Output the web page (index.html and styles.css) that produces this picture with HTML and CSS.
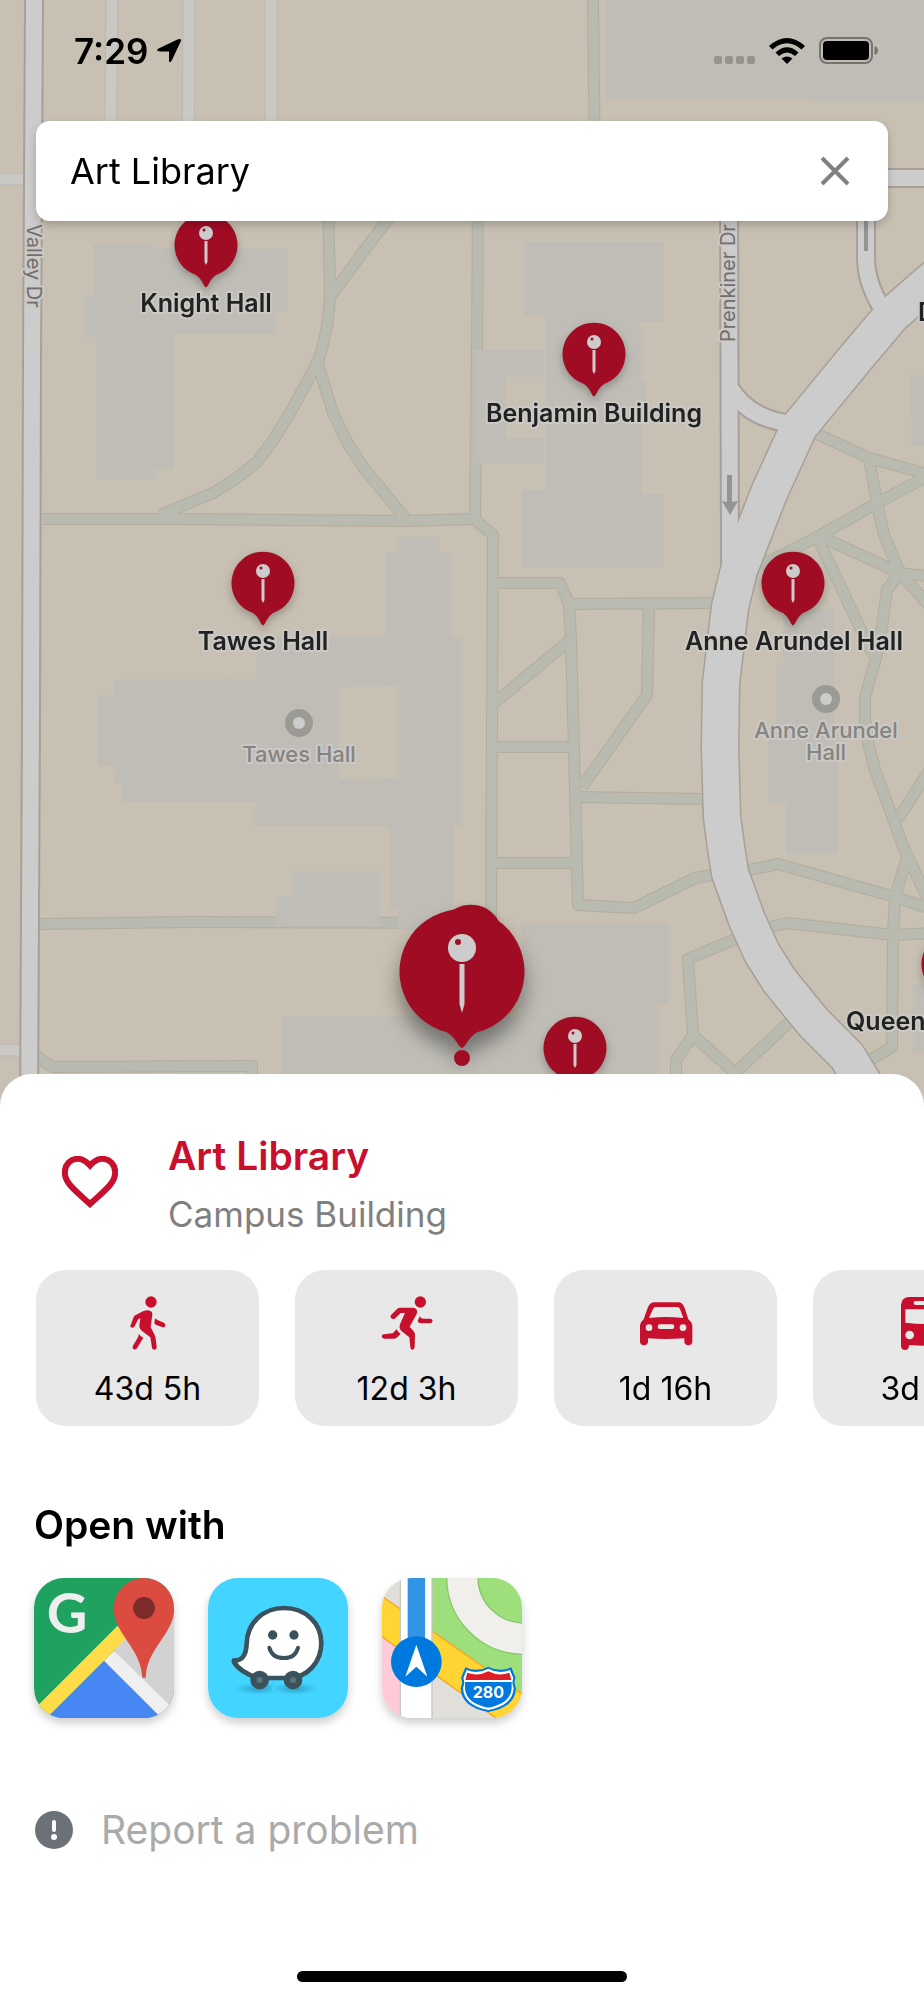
FILE: index.html
```html
<!DOCTYPE html>
<html lang="en">
<head>
    <meta charset="UTF-8">
    <meta name="viewport" content="width=device-width, initial-scale=1.0">
    <title>Campus Map - Art Library</title>
    <link rel="stylesheet" href="styles.css">
</head>
<body>

<div class="screen">
    <svg class="map" viewBox="0 0 924 1110" role="img" aria-label="Campus map">
        <defs>
            <g id="pin">
                <path class="pin-body" d="M0 42.500C-2 42-4 34-10 30A31.500 31.500 0 1 1 10 30C4 34 2 42 0 42.500z"/>
                <circle class="pin-light" cy="-12" r="7"/>
                <circle class="pin-dot" cx="-2" cy="-15" r="1.500"/>
                <path class="pin-light" d="M-1.500-4h3V17L0 20L-1.500 17z"/>
            </g>
            <g id="poi">
                <circle class="poi-ring" r="14"/>
                <circle class="poi-hole" r="6"/>
            </g>

            <!-- footpaths -->
            <path id="paths" d="M593 0L595 180
                M328 200L330 290Q330 325 318 362L290 413L272 442L257 462L237 478L213 493L160 515
                M395 210L360 256L330 297
                M316 358L333 413L347 442L363 467L405 518
                M42 519L180 519L405 521L474 519L493 535L492 725L491 923
                M478 200L477 350L475 519
                M493 583H560L569 604L571 640L575 787L578 905L634 908L695 878L712 875L749 870L778 864L895 897L934 910
                M569 604L715 603
                M649 604L647 695L582 787
                M570 640L492 705
                M492 747L574 747M576 797L706 799M492 863L577 863
                M740 937L688 959L693 1035L676 1060V1090
                M693 1035L735 1073L800 1012
                M765 928L787 923L893 935L934 933
                M865 720L869 747L875 770L907 857L895 897L893 933L892 1047L870 1060
                M907 855L934 912M898 819L934 763
                M815 433L869 458L934 476
                M869 458L877 503L884 535L900 573L887 590L879 647L865 697V725
                M934 473L877 503L819 536L760 566
                M819 536L900 573L934 577M817 537L873 655M900 573L934 611
                M40 924L193 922L491 923
                M35 1055L52 1067L252 1066V1100"/>

            <!-- side streets -->
            <path id="streets" d="M112 0L110 180M189 0L188 180M271 0V180M0 179H30M0 1050H26"/>

            <path id="drives" d="M34 0L32 360L31 720L29 1110M729 180L730 560L737 610
                M729 386Q748 420 795 424M866 180V258Q866 288 890 320M880 178H934"/>

            <path id="avenue" d="M944 270L892 315L854 360L799 427L769 493L739 570L730 607L721 683L720 747
                L722 817L726 847L730 873L747 920L762 953L779 980L813 1022L847 1056L880 1110"/>
        </defs>

        <rect class="ground" width="924" height="1110"/>

        <use href="#paths" class="path-edge"/>
        <use href="#paths" class="path-fill"/>
        <use href="#streets" class="street-edge"/>
        <use href="#streets" class="street-fill"/>

        <g class="building">
            <path d="M606 0H924V101H815V100H606z"/>
            <path d="M93 243H153V248L288 249V311H276V334H174V469H156V479H96V337H84V296H94z"/>
            <path d="M524 242H664V322H641V382H646V425H642V494H664V567H522V490H546V316H524z"/>
            <path d="M473 350H544V377H506V438H544V463H473z"/>
            <path fill-rule="evenodd" d="M397 537H440V553H451V638H461V826H454V930H398V910H390L389 826H255V802H122V783H115V766H98V695H114V680L256 679V637L386 636V553H397zM339 687V779L399 778V686z"/>
            <path d="M292 871H380V926H276V896H292z"/>
            <path d="M522 923H669V1004H657V1110H282V1016H522z"/>
            <path d="M783 609H834V735H838V853H786V803H768V735H776V663H783z"/>
            <path d="M910 375H924V446H912z"/>
            <path d="M913 984H924V1053H913z"/>
        </g>

        <use href="#drives" class="drive-edge"/>
        <use href="#avenue" class="avenue-edge"/>
        <use href="#drives" class="drive-fill"/>
        <use href="#avenue" class="avenue-fill"/>

        <!-- one way arrows -->
        <path class="arrow" d="M727 475h5v27l6-1L730 515L722 501l5 1z"/>
        <path class="arrow" d="M864 200h4V251h-4z"/>

        <g class="road-name">
            <text transform="translate(27 224) rotate(90)">Valley Dr</text>
            <text transform="translate(735 342) rotate(-90)">Prenkiner Dr</text>
        </g>

        <use href="#poi" x="299" y="723"/>
        <use href="#poi" x="826" y="699"/>
        <g class="poi-name">
            <text x="299" y="762">Tawes Hall</text>
            <text x="826" y="738">Anne Arundel</text>
            <text x="826" y="760">Hall</text>
        </g>

        <g class="pins">
            <use href="#pin" x="206" y="245"/>
            <use href="#pin" x="594" y="354"/>
            <use href="#pin" x="263" y="583"/>
            <use href="#pin" x="793" y="583"/>
            <use href="#pin" x="575" y="1048"/>
            <use href="#pin" x="953" y="964"/>
            <use href="#pin" x="471" y="936"/>
        </g>
        <g class="pin-name">
            <text x="206" y="312">Knight Hall</text>
            <text x="594" y="422">Benjamin Building</text>
            <text x="263" y="650">Tawes Hall</text>
            <text x="794" y="650">Anne Arundel Hall</text>
            <text class="from-left" x="846" y="1030">Queen Anne's Hall</text>
            <text class="from-left" x="918" y="321">Dorchester Hall</text>
        </g>

        <!-- selected building -->
        <g class="pin-selected">
            <path class="pin-body" d="M462 1048C459 1048 455 1036 446 1032A62.500 62.500 0 1 1 478 1032C469 1036 465 1048 462 1048z"/>
        </g>
        <circle class="pin-light" cx="462" cy="948" r="14"/>
        <circle class="pin-dot" cx="458" cy="942" r="3"/>
        <path class="pin-light" d="M459.500 964h5V1004L462 1013L459.500 1004z"/>
        <circle class="pin-dot" cx="462" cy="1058" r="8"/>
    </svg>

    <header class="top">
        <div class="status-bar">
            <div class="clock">
                <span>7:29</span>
                <svg width="26" height="24" viewBox="0 0 26 24"><path d="M23.500 0Q26 0 24.500 3L15.500 22Q13 25 13 21V12.500H4Q-1 12 2.500 9.500L21.500 .5z"/></svg>
            </div>
            <div class="signals">
                <svg class="cell" width="42" height="28" viewBox="0 0 42 28">
                    <rect x="0" y="19" width="8" height="8" rx="2"/>
                    <rect x="11" y="19" width="8" height="8" rx="2"/>
                    <rect x="22" y="19" width="8" height="8" rx="2"/>
                    <rect x="33" y="19" width="8" height="8" rx="2"/>
                </svg>
                <svg width="36" height="26" viewBox="0 0 36 26">
                    <path d="M0 8Q18-8 36 8L32.500 11.500Q18-1 3.500 11.500z"/>
                    <path d="M6.500 14.500Q18 4 29.500 14.500L26 18Q18 11 10 18z"/>
                    <path d="M12.500 20.500Q18 16.500 23.500 20.500L18 26z"/>
                </svg>
                <svg width="60" height="28" viewBox="0 0 60 28">
                    <rect class="battery-case" x="2" y="1" width="52" height="25" rx="7"/>
                    <rect x="5" y="4" width="46" height="19" rx="4"/>
                    <path class="battery-tip" d="M56.500 9Q60 10 60 13.500T56.500 18z"/>
                </svg>
            </div>
        </div>

        <form class="search">
            <input type="text" name="place" value="Art Library" aria-label="Search for a building">
            <button type="button" class="clear" aria-label="Clear search">
                <svg width="30" height="30" viewBox="0 0 30 30"><path d="M2 2L28 28M28 2L2 28"/></svg>
            </button>
        </form>
    </header>

    <main class="sheet">
        <div class="place">
            <button type="button" class="favorite" aria-label="Add to favorites">
                <svg width="56" height="52" viewBox="0 0 56 52"><path d="M28 9.500C24 5 20 2.800 15.500 2.800C8.500 2.800 2.800 8.500 2.800 16.500C2.800 28 16 36.500 28 48C40 36.500 53.200 28 53.200 16.500C53.200 8.500 47.500 2.800 40.500 2.800C36 2.800 32 5 28 9.500z"/></svg>
            </button>
            <div>
                <h1>Art Library</h1>
                <p>Campus Building</p>
            </div>
        </div>

        <div class="modes">
            <button type="button" class="mode">
                <svg viewBox="0 0 162 162">
                    <circle cx="90" cy="18" r="17"/>
                    <path d="M28 90L38 63Q40 59 44 57L66 46Q82 38 93 48Q94 52 94 56L89 93L101 117Q103 122 104 128L107 153Q107 161 100 161Q94 161 93 155L88 124L62 104Q54 96 55 88L58 67L52 69L41 91Q38 96 33 95Q27 94 28 90z"/>
                    <path d="M54 114Q58 122 67 125L48 157Q44 162 38 160Q33 157 35 151L51 124z"/>
                    <path d="M103 67Q106 71 110 72L130 81Q134 84 133 89Q131 95 125 94L104 86Q99 83 100 78z"/>
                </svg>
                <span>43d 5h</span>
            </button>
            <button type="button" class="mode">
                <svg viewBox="0 0 162 162">
                    <circle cx="121" cy="18" r="17"/>
                    <path d="M33 57L52 38Q55 35 60 35L100 35Q113 37 111 50Q110 54 108 58L89 92L102 107Q105 111 105 117L104 154Q103 161 97 161Q91 161 91 154L88 124L64 105Q56 97 60 85L75 51L62 51L44 68Q38 71 34 67Q30 62 33 57z"/>
                    <path d="M50 100Q53 108 62 113L52 124Q48 128 42 128L12 128Q5 127 5 121Q5 115 12 115L38 112z"/>
                    <path d="M119 61Q122 68 130 68L151 68Q158 69 158 75Q157 81 151 82L122 82Q114 81 113 75z"/>
                </svg>
                <span>12d 3h</span>
            </button>
            <button type="button" class="mode">
                <svg viewBox="0 0 162 162">
                    <path fill-rule="evenodd" d="M3 138V88Q4 78 14 70L26 36Q32 19 46 19H118Q131 19 137 36L148 70Q159 78 160 88V138Q159 147 148 148Q137 147 136 138V127Q81 131 27 127V138Q26 147 14 148Q4 147 3 138zM42 39L30 66Q81 60 133 66L123 39Q121 33 114 33H50Q44 33 42 39zM20 95a10 10 0 1 0 20 0a10 10 0 1 0-20 0zM122 95a10 10 0 1 0 20 0a10 10 0 1 0-20 0zM63 85a7 7 0 0 0 0 14H99a7 7 0 0 0 0-14z"/>
                </svg>
                <span>1d 16h</span>
            </button>
            <button type="button" class="mode">
                <svg viewBox="0 0 162 162">
                    <path fill-rule="evenodd" d="M9 26Q11 3 34 3H128Q151 3 153 26V150Q152 162 141 162Q130 162 129 150V147Q81 151 33 147V150Q32 162 21 162Q10 162 9 150zM22 40V80Q81 88 140 80V40zM53 15a6 6 0 0 0 0 12H109a6 6 0 0 0 0-12zM22 117a13 13 0 1 0 26 0a13 13 0 1 0-26 0zM114 117a13 13 0 1 0 26 0a13 13 0 1 0-26 0z"/>
                </svg>
                <span>3d 4h</span>
            </button>
        </div>

        <h2>Open with</h2>

        <div class="apps">
            <a href="#google-maps" class="app" aria-label="Google Maps">
                <svg viewBox="0 0 420 420">
                    <rect width="420" height="420" fill="#1fa160"/>
                    <path fill="#d2d2d2" d="M240 218L420 0V420z"/>
                    <path fill="#4787f3" d="M210 248L20 438H400z"/>
                    <path fill="#efefef" d="M240 218L450 424L410 448L210 248z"/>
                    <path fill="#ffdc48" d="M251 143L-10 404L20 438L285 173z"/>
                    <path fill="#db4b40" d="M330 300Q324 300 324 290C318 210 239 165 239 91A91 91 0 0 1 421 91C421 165 342 210 336 290Q336 300 330 300z"/>
                    <circle fill="#7e2c2a" cx="330" cy="90" r="33"/>
                    <text class="g-mark" x="99" y="165">G</text>
                </svg>
            </a>
            <a href="#waze" class="app" aria-label="Waze">
                <svg viewBox="0 0 420 420">
                    <defs>
                        <radialGradient id="wheel-shadow">
                            <stop offset="0" stop-color="#2ba3c8"/>
                            <stop offset="1" stop-color="#43d4ff"/>
                        </radialGradient>
                    </defs>
                    <rect width="420" height="420" fill="#43d4ff"/>
                    <ellipse fill="url(#wheel-shadow)" cx="150" cy="332" rx="70" ry="18"/>
                    <ellipse fill="url(#wheel-shadow)" cx="260" cy="332" rx="70" ry="18"/>
                    <path fill="#fff" stroke="#3b525c" stroke-width="14" stroke-linejoin="round" d="M78 247Q114 250 116 196C118 135 165 90 228 90C292 90 340 135 340 195C340 250 300 300 240 300H150C115 290 88 270 78 252Q77 248 78 247z"/>
                    <g fill="#3b525c">
                        <circle cx="194" cy="171" r="14"/>
                        <circle cx="258" cy="171" r="14"/>
                        <circle cx="155" cy="306" r="28"/>
                        <circle cx="255" cy="306" r="28"/>
                    </g>
                    <path fill="none" stroke="#3b525c" stroke-width="12" stroke-linecap="round" d="M184 209Q192 240 228 240Q262 240 270 209"/>
                    <circle fill="#5d737c" cx="155" cy="306" r="9"/>
                    <circle fill="#5d737c" cx="255" cy="306" r="9"/>
                </svg>
            </a>
            <a href="#apple-maps" class="app" aria-label="Apple Maps">
                <svg viewBox="0 0 420 420">
                    <rect width="420" height="420" fill="#e0dfda"/>
                    <path fill="#ffcbd8" d="M0 176L56 215V420H0z"/>
                    <path fill="#9cdf7b" d="M150 0H420V360L150 158z"/>
                    <circle fill="none" stroke="#88c46e" stroke-width="98" cx="425" cy="-2" r="184"/>
                    <circle fill="none" stroke="#f1efeb" stroke-width="90" cx="425" cy="-2" r="184"/>
                    <path fill="#ffd534" stroke="#ff9f1a" stroke-width="4" d="M-20 41L440 361V490L-20 162z"/>
                    <path fill="#fff" stroke="#c9c8bd" stroke-width="4" d="M55-5H150V425H55z"/>
                    <path fill="#3294e4" d="M77 0H129V200H77z"/>
                    <circle fill="#0079de" cx="103" cy="251" r="76"/>
                    <path fill="#fff" d="M103 200L136 296L103 266L70 296z"/>
                    <path fill="#0079de" d="M250 268Q285 284 319 266Q353 284 388 268L401 300Q394 312 402 330Q400 388 319 402Q238 388 236 330Q244 312 237 300z"/>
                    <path fill="#fff" d="M254 276Q287 290 319 272Q351 290 384 276L394 301Q388 313 395 331Q392 383 319 396Q246 383 243 331Q250 313 244 301z"/>
                    <path fill="#df1f26" d="M256 284Q289 296 319 280Q349 296 382 284L388 306H250z"/>
                    <path fill="#0079de" d="M249 312H389L389 331Q386 377 319 389Q252 377 249 331z"/>
                    <text class="shield" x="319" y="360">280</text>
                </svg>
            </a>
        </div>

        <a href="#report" class="report">
            <svg width="38" height="38" viewBox="0 0 38 38">
                <circle fill="#6c7178" cx="19" cy="19" r="19"/>
                <rect fill="#fff" x="17" y="9" width="4" height="12" rx="2"/>
                <circle fill="#fff" cx="19" cy="26" r="3"/>
            </svg>
            <span>Report a problem</span>
        </a>

        <div class="home-indicator"></div>
    </main>
</div>

</body>
</html>
```
FILE: styles.css
```css
* {
    box-sizing: border-box;
}

body {
    margin: 0;
    font-family: Inter, "Liberation Sans", sans-serif;
    background-color: #c8c0b2;
    color: #000;
}

h1,
h2,
p {
    margin: 0;
}

button {
    font-family: inherit;
    border: none;
    padding: 0;
    background: none;
    cursor: pointer;
}

.screen {
    position: relative;
    min-height: 100vh;
    display: flex;
    flex-direction: column;
    justify-content: space-between;
    overflow: hidden;
}

/* Map */
.map {
    position: absolute;
    top: 0;
    left: 0;
    width: 100%;
    height: auto;
}

.ground {
    fill: #c8c0b2;
}

.building {
    fill: #bfbdb6;
}

.map use {
    stroke-linejoin: round;
}

.path-edge,
.path-fill,
.street-edge,
.street-fill,
.drive-edge,
.drive-fill,
.avenue-edge,
.avenue-fill {
    fill: none;
}

.path-edge {
    stroke: #b2ad9c;
    stroke-width: 12px;
}

.path-fill {
    stroke: #b9bab0;
    stroke-width: 10px;
}

.street-edge {
    stroke: #b9b7af;
    stroke-width: 13px;
}

.street-fill {
    stroke: #c9c8c4;
    stroke-width: 11px;
}

.drive-edge {
    stroke: #a89f96;
    stroke-width: 20px;
}

.drive-fill {
    stroke: #ccc;
    stroke-width: 16px;
}

.avenue-edge {
    stroke: #a89f96;
    stroke-width: 39px;
}

.avenue-fill {
    stroke: #ccc;
    stroke-width: 36px;
}

.arrow {
    fill: #949494;
}

.map text {
    stroke: #cbc9c6;
    stroke-width: 4px;
    stroke-linejoin: round;
    paint-order: stroke;
    text-anchor: middle;
}

.map .road-name text {
    font-size: 20px;
    fill: #6f6f6f;
    text-anchor: start;
}

.poi-name text {
    font-size: 22px;
    font-weight: 500;
    fill: #85847f;
}

.pin-name text {
    font-size: 25px;
    font-weight: 600;
    fill: #222;
}

.map .pin-name .from-left {
    text-anchor: start;
}

.poi-ring {
    fill: #9b9a94;
}

.poi-hole {
    fill: #ccc;
}

.pins {
    filter: drop-shadow(0 4px 4px rgba(0, 0, 0, 0.25));
}

.pin-selected {
    filter: drop-shadow(0 14px 10px rgba(0, 0, 0, 0.4));
}

.pin-body,
.pin-dot {
    fill: #a00c24;
}

.pin-light {
    fill: #cdcbcb;
}

/* Status bar and search */
.top {
    position: relative;
    padding: 0 36px;
}

.status-bar {
    display: flex;
    justify-content: space-between;
    align-items: center;
    height: 101px;
    padding: 0 10px 0 38px;
    margin-bottom: 20px;
}

.clock,
.signals {
    display: flex;
    align-items: center;
}

.clock {
    gap: 8px;
    font-size: 35px;
    font-weight: 600;
}

.signals {
    gap: 13px;
}

.cell {
    fill: #97948f;
}

.battery-case {
    fill: none;
    stroke: #77746f;
    stroke-width: 2px;
}

.battery-tip {
    fill: #77746f;
}

.search {
    display: flex;
    align-items: center;
    height: 100px;
    padding: 0 38px 0 34px;
    background-color: #fff;
    border-radius: 14px;
    box-shadow: 0 4px 8px rgba(0, 0, 0, 0.2);
}

.search input {
    flex: 1;
    min-width: 0;
    padding: 0;
    border: none;
    outline: none;
    background: none;
    font-family: inherit;
    font-size: 36px;
    color: #000;
}

.clear svg {
    display: block;
    fill: none;
    stroke: #808080;
    stroke-width: 4px;
}

/* Bottom sheet */
.sheet {
    position: relative;
    display: flex;
    flex-direction: column;
    padding: 54px 0 18px;
    background-color: #fff;
    border-radius: 32px 32px 0 0;
}

.place {
    display: flex;
    align-items: flex-start;
    gap: 50px;
    padding: 0 62px;
    margin-bottom: 26px;
}

.favorite {
    padding-top: 28px;
}

.favorite svg {
    display: block;
    fill: none;
    stroke: #c8102e;
    stroke-width: 6px;
}

.place h1 {
    font-size: 39px;
    font-weight: 600;
    line-height: 56px;
    color: #c8102e;
}

.place p {
    font-size: 35px;
    line-height: 60px;
    color: #808080;
}

.modes {
    display: flex;
    gap: 36px;
    padding: 0 36px;
    overflow-x: auto;
    scrollbar-width: none;
}

.mode {
    flex: 0 0 223px;
    display: flex;
    flex-direction: column;
    align-items: center;
    gap: 18px;
    padding: 26px 0 16px;
    background-color: #e8e8e8;
    border-radius: 30px;
    font-size: 32px;
    line-height: 42px;
    color: #000;
}

.mode svg {
    width: 54px;
    height: 54px;
    fill: #c8102e;
}

.sheet h2 {
    margin: 75px 34px 29px;
    font-size: 39px;
    font-weight: 600;
    line-height: 48px;
}

.apps {
    display: flex;
    gap: 34px;
    padding: 0 34px;
}

.app {
    width: 140px;
    height: 140px;
    border-radius: 30px;
    overflow: hidden;
    box-shadow: 0 5px 10px rgba(0, 0, 0, 0.2);
}

.app svg {
    display: block;
}

.app text {
    text-anchor: middle;
    font-weight: 700;
}

.g-mark {
    font-family: Lato, sans-serif;
    font-size: 168px;
    fill: #efefef;
}

.shield {
    font-size: 48px;
    fill: #fff;
}

.report {
    display: flex;
    align-items: center;
    gap: 28px;
    margin: 88px 35px 0;
    font-size: 39px;
    line-height: 48px;
    color: #aaa;
    text-decoration: none;
}

.home-indicator {
    width: 330px;
    height: 11px;
    margin: 117px auto 0;
    border-radius: 6px;
    background-color: #000;
}
```
